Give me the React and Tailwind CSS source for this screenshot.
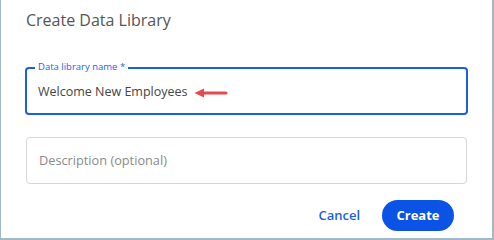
import React from "react";

export default function App() {
  return (
    <div
      className="w-[494px] h-[240px] bg-white border-l border-r-2 border-b-2 border-[#a3b8c6] box-border flex flex-col"
      style={{ fontFamily: '"Open Sans", "Noto Sans", sans-serif' }}
    >
      <div className="pl-[25px] pt-[8px] text-[16px] leading-[24px] text-[#555555]">Create Data Library</div>
      <div className="mt-[35px] mx-[24px] relative h-[48px] border-2 border-[#1b5fe3] rounded-[4px] flex items-center pl-[11px]">
        <span className="absolute left-[8px] top-[-8px] bg-white px-[3px] text-[9.5px] leading-[12px] text-[#2563eb]">
          Data library name *
        </span>
        <span className="text-[12.5px] text-[#454545] pt-[3px]">Welcome New Employees</span>
        <svg width="34" height="10" viewBox="0 0 34 10" className="ml-[6px] mt-[3px]">
          <line x1="6" y1="5" x2="32" y2="5" stroke="#e8474d" strokeWidth="3" strokeLinecap="round" />
          <path d="M0.5 5 L10 0.5 L10 9.5 Z" fill="#e8474d" />
        </svg>
      </div>
      <div className="mt-[22px] mx-[25px] h-[47px] border border-[#d6d6d6] rounded-[4px] flex items-center pl-[12px]">
        <span className="text-[12.75px] text-[#8a8a8a]">Description (optional)</span>
      </div>
      <div className="mt-[16px] flex items-center justify-end pr-[38px]">
        <button className="text-[13px] font-semibold text-[#1b5fe3] mr-[22px]">Cancel</button>
        <button className="w-[72px] h-[31px] rounded-full bg-[#0a53e4] text-white text-[13px] font-bold">Create</button>
      </div>
    </div>
  );
}
